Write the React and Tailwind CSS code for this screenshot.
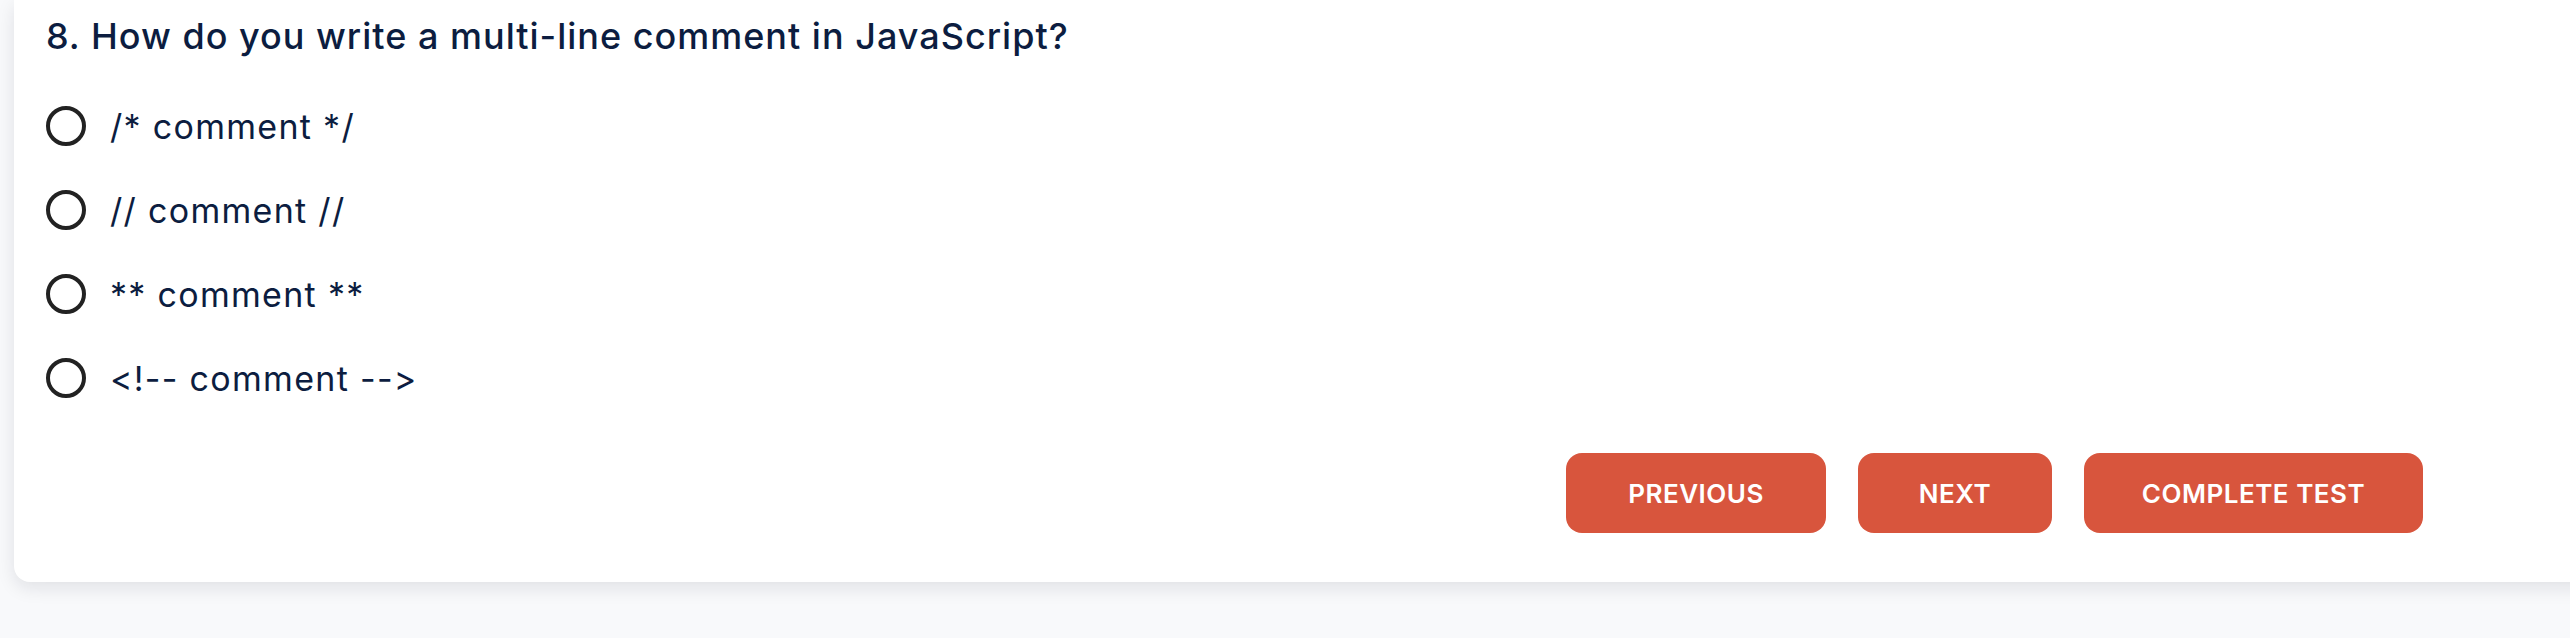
import { useState } from "react";

const options = ["/* comment */", "// comment //", "** comment **", "<!-- comment -->"];

const App = () => {
  const [picked, setPicked] = useState(null);

  return (
    <div className="w-full h-[638px] overflow-hidden bg-[#f8f9fb] font-['Inter','Liberation_Sans',sans-serif] [font-feature-settings:'calt'_0,'liga'_0]">
      {/*<!--============== Question Card ==============-->*/}
      <div className="ml-[14px] w-[2620px] bg-white rounded-bl-[16px] shadow-[0_6px_18px_rgba(17,24,39,0.10)] pl-[32px] pt-[12px] pb-[49px]">
        <h2 className="h-[48px] leading-[48px] text-[36px] font-medium text-[#0c1d40] tracking-[1px]">
          8. How do you write a multi-line comment in JavaScript?
        </h2>

        <div className="mt-[24px] flex flex-col">
          {options.map((opt, i) => (
            <label key={i} className="h-[84px] flex items-center gap-[24px] cursor-pointer" onClick={() => setPicked(i)}>
              <span className="w-[40px] h-[40px] rounded-full border-[4px] border-[#222222] flex items-center justify-center">
                {picked === i && <span className="w-[20px] h-[20px] rounded-full bg-[#222222]"></span>}
              </span>
              <span className="text-[34px] text-[#0c1d40] tracking-[1.3px]">{opt}</span>
            </label>
          ))}
        </div>

        {/*<!--============== Buttons ==============-->*/}
        <div className="mt-[33px] w-[2377px] flex justify-end gap-[32px]">
          <button className="h-[80px] w-[260px] rounded-[16px] bg-[#d8553d] text-white text-[26px] font-semibold tracking-[0.5px]">PREVIOUS</button>
          <button className="h-[80px] w-[194px] rounded-[16px] bg-[#d8553d] text-white text-[26px] font-semibold tracking-[0.5px]">NEXT</button>
          <button className="h-[80px] w-[339px] rounded-[16px] bg-[#d8553d] text-white text-[26px] font-semibold tracking-[0.5px]">COMPLETE TEST</button>
        </div>
      </div>
    </div>
  );
};

export default App;
